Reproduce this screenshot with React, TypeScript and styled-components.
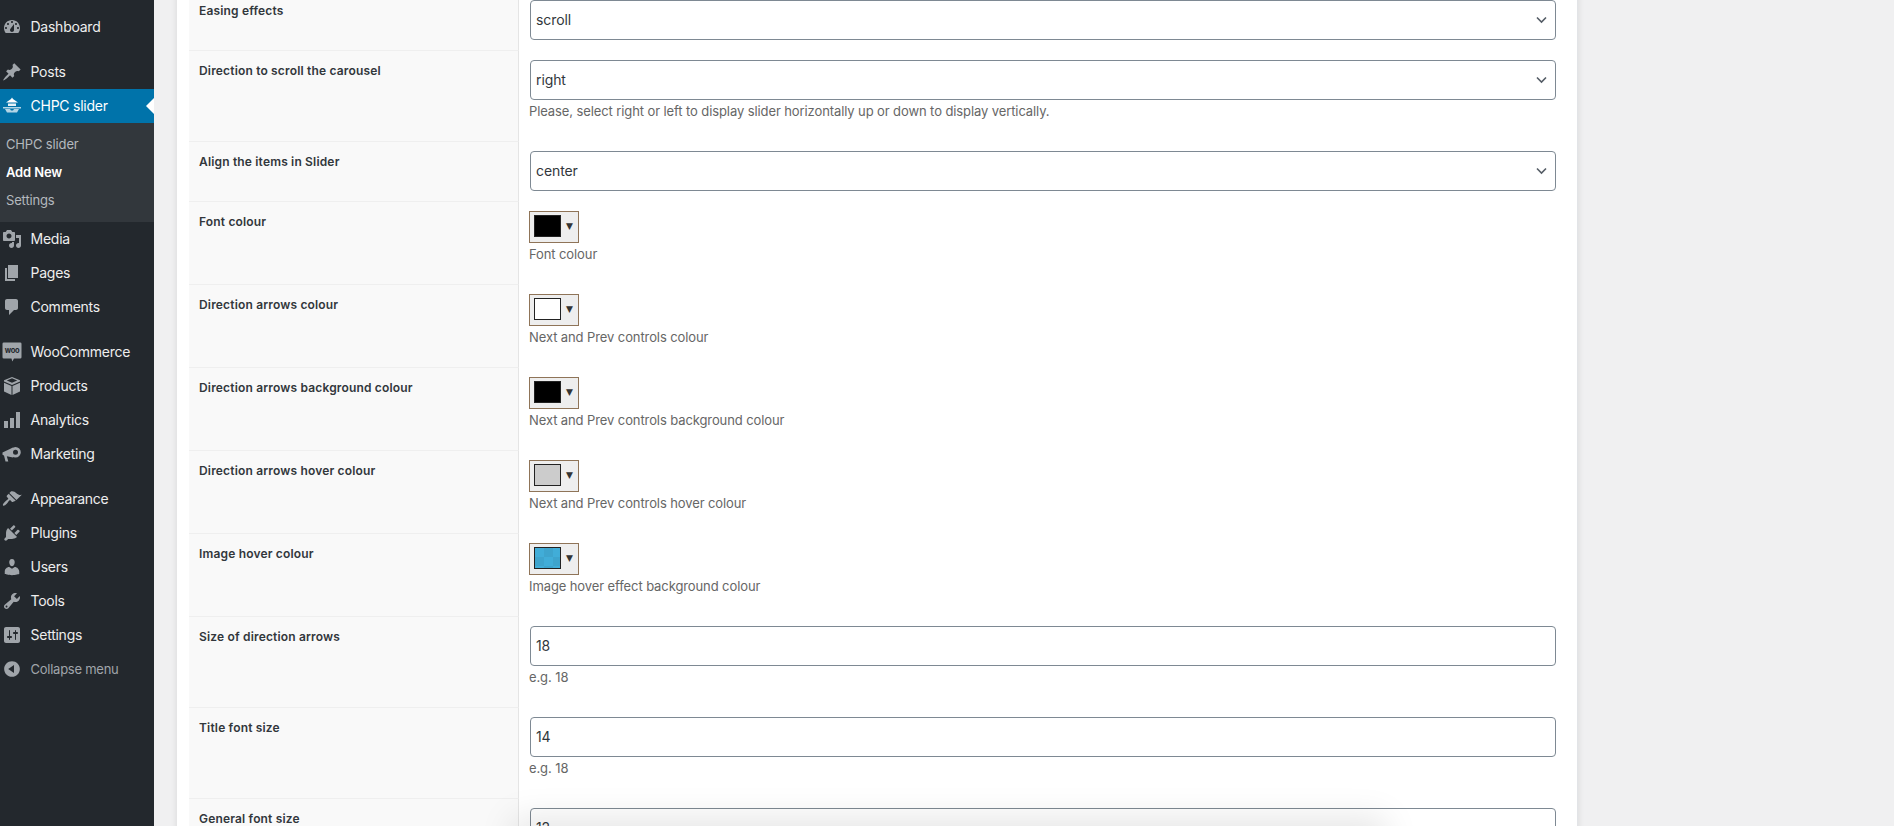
import { ReactNode } from 'react';
import styled, { createGlobalStyle } from 'styled-components';

const GlobalStyle = createGlobalStyle`
  html, body {
    margin: 0;
    height: 826px;
    overflow: hidden;
    background: #f0f0f1;
    font-family: Inter, "Noto Sans", sans-serif;
  }
`;

const Page = styled.div`
  display: flex;
  height: 826px;
  overflow: hidden;
`;

const Sidebar = styled.nav`
  flex: 0 0 154px;
  padding-top: 10px;
  background: #23282d;
`;

const MenuList = styled.ul<{ $flush?: boolean }>`
  margin: 0 0 ${({ $flush }) => ($flush ? 0 : 11)}px;
  padding: 0;
  list-style: none;
`;

const MenuItem = styled.li<{ $current?: boolean; $muted?: boolean }>`
  position: relative;
  box-sizing: border-box;
  display: flex;
  align-items: center;
  height: 34px;
  padding: 0 0 1px 2px;
  gap: 8.5px;
  font-size: ${({ $muted }) => ($muted ? 13 : 14)}px;
  letter-spacing: -0.25px;
  color: ${({ $muted }) => ($muted ? '#a0a5aa' : '#eee')};
  background: ${({ $current }) => ($current ? '#0073aa' : 'transparent')};
  ${({ $current }) =>
    $current &&
    `
    color: #fff;
    &::after {
      content: '';
      position: absolute;
      right: 0;
      top: 50%;
      margin-top: -8px;
      border: 8px solid transparent;
      border-right-color: #fff;
      border-left-width: 0;
    }
  `}
`;

const MenuIcon = styled.svg<{ $light?: boolean }>`
  flex: 0 0 20px;
  width: 20px;
  height: 20px;
  fill: ${({ $light }) => ($light ? '#fff' : '#a0a5aa')};
`;

const SubMenu = styled.ul`
  box-sizing: border-box;
  display: flex;
  flex-direction: column;
  justify-content: center;
  height: 99px;
  margin: 0;
  padding: 0 0 2px 6px;
  list-style: none;
  background: #32373c;
`;

const SubItem = styled.li<{ $active?: boolean }>`
  font-size: 13px;
  line-height: 28px;
  letter-spacing: -0.15px;
  color: ${({ $active }) => ($active ? '#fff' : '#b4b9be')};
  font-weight: ${({ $active }) => ($active ? 600 : 400)};
`;

const Main = styled.main`
  position: relative;
  flex: 1;
  min-width: 0;
  padding: 0 316px 0 23px;
`;

const Card = styled.div`
  margin-top: -9px;
  padding: 0 11px 0 12px;
  background: #fff;
  border-right: 1px solid #e2e4e7;
  box-shadow: 0 0 7px rgba(0, 0, 0, 0.1);
`;

const Row = styled.div`
  display: grid;
  grid-template-columns: 330px 1fr;
`;

const Label = styled.div`
  padding: 12px 0 0 10px;
  background: #f9f9f9;
  border-right: 1px solid #e5e5e5;
  border-bottom: 1px solid #efefef;
  color: #32373c;
  font-size: 12px;
  font-weight: 600;
  line-height: 16px;
  letter-spacing: 0.17px;
`;

const Field = styled.div`
  padding: 9px 10px 10px 10px;
  border-bottom: 1px solid #fff;
`;

const SelectWrap = styled.div`
  position: relative;
  margin-left: 1px;
`;

const Select = styled.select`
  display: block;
  width: 100%;
  height: 40px;
  padding: 0 24px 1px 5px;
  appearance: none;
  background: #fff;
  border: 1px solid #7e8993;
  border-radius: 4px;
  color: #32373c;
  font: 400 14px Inter, sans-serif;
  letter-spacing: -0.1px;
`;

const Chevron = styled.svg`
  position: absolute;
  right: 9px;
  top: 16px;
  width: 11px;
  height: 8px;
  fill: none;
  stroke: #555d66;
  stroke-width: 1.6;
`;

const NumberInput = styled.input`
  display: block;
  box-sizing: border-box;
  width: calc(100% - 1px);
  height: 40px;
  margin-left: 1px;
  padding: 0 5px 1px;
  background: #fff;
  border: 1px solid #7e8993;
  border-radius: 4px;
  color: #32373c;
  font: 400 14px Inter, sans-serif;
  letter-spacing: -0.1px;
`;

const Description = styled.p`
  margin: 0;
  padding-bottom: 9px;
  font-size: 13px;
  line-height: 22px;
  letter-spacing: -0.1px;
  color: #666;
`;

const Picker = styled.div`
  box-sizing: border-box;
  display: flex;
  align-items: center;
  width: 50px;
  height: 32px;
  padding: 0 0 2px 4px;
  background: #eee;
  border: 1px solid #8f7458;
`;

const Swatch = styled.span<{ $colour: string; $pattern?: boolean }>`
  box-sizing: border-box;
  width: 27px;
  height: 22px;
  border: 1px solid #222;
  background-color: ${({ $colour }) => $colour};
  ${({ $pattern }) =>
    $pattern &&
    `
    background-image: repeating-conic-gradient(rgba(0, 0, 0, 0.05) 0 25%, transparent 0 50%);
    background-size: 18px 18px;
  `}
`;

const PickerArrow = styled.span`
  margin-left: 5px;
  font: 9px "DejaVu Sans", sans-serif;
  color: #333;
`;

const BottomGlow = styled.div`
  position: absolute;
  left: 370px;
  bottom: -34px;
  width: 850px;
  height: 30px;
  background: rgba(0, 0, 0, 0.1);
  box-shadow: 0 0 34px 12px rgba(0, 0, 0, 0.1);
  pointer-events: none;
`;

type IconProps = { light?: boolean; children: ReactNode };

function Icon({ light, children }: IconProps) {
  return (
    <MenuIcon viewBox="0 0 20 20" $light={light}>
      {children}
    </MenuIcon>
  );
}

const paths: Record<string, string> = {
  dashboard:
    'M3.76 16h12.48c1.1-1.37 1.76-3.11 1.76-5 0-4.42-3.58-8-8-8s-8 3.58-8 8c0 1.89.66 3.63 1.76 5zM10 4c.55 0 1 .45 1 1s-.45 1-1 1-1-.45-1-1 .45-1 1-1zM6 6c.55 0 1 .45 1 1s-.45 1-1 1-1-.45-1-1 .45-1 1-1zm8 0c.55 0 1 .45 1 1s-.45 1-1 1-1-.45-1-1 .45-1 1-1zm-5.37 5.55L12 7v6c0 1.1-.9 2-2 2s-2-.9-2-2c0-.57.24-1.08.63-1.45zM4 10c.55 0 1 .45 1 1s-.45 1-1 1-1-.45-1-1 .45-1 1-1zm12 0c.55 0 1 .45 1 1s-.45 1-1 1-1-.45-1-1 .45-1 1-1z',
  posts:
    'M10.44 3.02l1.82-1.82 6.36 6.35-1.83 1.82c-1.05-.68-2.48-.57-3.41.36l-.75.75c-.92.93-1.04 2.35-.35 3.41l-1.83 1.82-2.41-2.41-2.8 2.79c-.42.42-3.38 2.71-3.8 2.29s1.86-3.39 2.28-3.81l2.79-2.79L4.1 9.36l1.83-1.82c1.05.69 2.48.57 3.4-.36l.75-.75c.93-.92 1.05-2.35.36-3.41z',
  media:
    'M13 11V4c0-.55-.45-1-1-1h-1.67L9 1H5L3.67 3H2c-.55 0-1 .45-1 1v7c0 .55.45 1 1 1h10c.55 0 1-.45 1-1zM7 4.5c1.38 0 2.5 1.12 2.5 2.5S8.38 9.5 7 9.5 4.5 8.38 4.5 7 5.62 4.5 7 4.5zM14 6h5v10.5c0 1.38-1.12 2.5-2.5 2.5S14 17.88 14 16.5s1.12-2.5 2.5-2.5c.17 0 .34.02.5.05V9h-3V6zm-4 8.05V13h2v3.5c0 1.38-1.12 2.5-2.5 2.5S7 17.88 7 16.5 8.12 14 9.5 14c.17 0 .34.02.5.05z',
  pages: 'M6 15V2h10v13H6zm-1 1h8v2H3V5h2v11z',
  comments:
    'M5 2h9c1.1 0 2 .9 2 2v7c0 1.1-.9 2-2 2h-2l-5 5v-5H5c-1.1 0-2-.9-2-2V4c0-1.1.9-2 2-2z',
  products:
    'M10 1l8 3.200v1.300L10 9 2 5.500V4.200zM4.800 4.500l5.200 2.300 5.200-2.300-5.200-2.200zM2 6.800l7.500 3.300V19L2 15.500zM18 6.800v8.700L10.500 19v-8.900z',
  analytics: 'M2 11h4v7H2zM8 8h4v10H8zM14 2h4v16h-4z',
  appearance:
    'M14.480 11.060L7.410 3.990l1.500-1.500c.5-.56 2.300-.47 3.510.32 1.210.8 1.430 1.280 2.910 2.100 1.180.64 2.450 1.260 4.450.85zm-.71.71L6.700 4.700 4.930 6.470c-.39.39-.39 1.020 0 1.410l1.060 1.060c.39.39.39 1.030 0 1.420-.6.6-1.430 1.110-2.210 1.690-.35.26-.7.53-1.010.84-1.340 1.340-2.370 2.960-1.750 3.710.75.62 2.360-.42 3.720-1.780.31-.31.58-.66.85-1.010.57-.78 1.080-1.610 1.690-2.210.39-.39 1.020-.39 1.410 0l1.060 1.060c.39.39 1.020.39 1.410 0z',
  plugins:
    'M13.110 4.360L9.870 7.600 8 5.730l3.240-3.240c.35-.34 1.050-.2 1.560.32.52.51.66 1.210.31 1.550zm-8 1.770l.91-1.120 9.010 9.010-1.190.84c-.71.71-2.630 1.160-3.820 1.160H6.140L4.900 17.260c-.59.59-1.540.59-2.120 0-.59-.58-.59-1.530 0-2.120l1.240-1.240v-3.880c0-1.130.4-3.190 1.090-3.890zm7.260 3.970l3.240-3.240c.34-.35 1.040-.21 1.550.31.52.51.66 1.210.31 1.550l-3.240 3.250z',
  users:
    'M10 9.250c-2.270 0-2.730-3.440-2.730-3.440C7 4.020 7.820 2 9.970 2c2.160 0 2.980 2.020 2.710 3.810 0 0-.41 3.440-2.680 3.440zm0 2.570L12.720 10c2.390 0 4.520 2.330 4.520 4.530v2.490s-3.650 1.130-7.240 1.130c-3.650 0-7.240-1.130-7.240-1.130v-2.490c0-2.250 1.940-4.480 4.470-4.480z',
  tools:
    'M16.680 9.770c-1.340 1.340-3.300 1.670-4.950.99l-5.410 6.520c-.99.99-2.590.99-3.580 0s-.99-2.590 0-3.570l6.520-5.420c-.68-1.650-.35-3.610.99-4.950 1.280-1.280 3.120-1.620 4.720-1.060l-2.890 2.890 2.820 2.820 2.860-2.870c.53 1.580.18 3.390-1.080 4.650zM3.810 16.210c.4.39 1.040.39 1.430 0 .4-.4.4-1.040 0-1.430-.39-.4-1.030-.4-1.430 0-.39.39-.39 1.030 0 1.430z',
  settings:
    'M18 16V4c0-1.100-.9-2-2-2H4c-1.100 0-2 .9-2 2v12c0 1.100.9 2 2 2h12c1.100 0 2-.9 2-2zM8 11h1c.55 0 1 .45 1 1s-.45 1-1 1H8v1.500c0 .28-.22.5-.5.5s-.5-.22-.5-.5V13H6c-.55 0-1-.45-1-1s.45-1 1-1h1V5.500c0-.28.22-.5.5-.5s.5.22.5.5V11zm5-2h-1c-.55 0-1-.45-1-1s.45-1 1-1h1V5.500c0-.28.22-.5.5-.5s.5.22.5.5V7h1c.55 0 1 .45 1 1s-.45 1-1 1h-1v5.500c0 .28-.22.5-.5.5s-.5-.22-.5-.5V9z',
  collapse:
    'M10 2.160c4.330 0 7.840 3.510 7.840 7.840s-3.510 7.840-7.840 7.840S2.160 14.330 2.160 10 5.670 2.160 10 2.160zm2 11.720V6.120L6.180 9.970z',
};

function DashIcon({ name }: { name: string }) {
  return (
    <Icon>
      <path d={paths[name]} />
    </Icon>
  );
}

function WooIcon() {
  return (
    <Icon>
      <path d="M1.800 0.500h16.400A1.300 1.300 0 0 1 19.500 1.800v13.400a1.300 1.300 0 0 1-1.300 1.300H12l-1.700 3-.8-3H1.800A1.300 1.300 0 0 1 .5 15.200V1.800A1.300 1.300 0 0 1 1.800 .5z" />
      <text x="10" y="11" textAnchor="middle" fontSize="7.500" fontWeight="700" letterSpacing="-.3" fill="#23282d" fontFamily="Inter, sans-serif">
        woo
      </text>
    </Icon>
  );
}

function MarketingIcon() {
  return (
    <Icon>
      <path d="M.5 8.500L11 3.500v10l-6.200-1.300 1.500 5.300H3.500L2 11.500.5 10.800z" />
      <path
        fillRule="evenodd"
        d="M13.500 3a5.300 5.300 0 1 1 0 10.600 5.300 5.300 0 0 1 0-10.600zm0 2.800a2.500 2.500 0 1 0 0 5 2.500 2.500 0 0 0 0-5z"
      />
    </Icon>
  );
}

function SliderIcon() {
  return (
    <Icon light>
      <path d="M10 1.500l1 1.500 5 3.500H4l5-3.500z" />
      <path d="M6 7.500h8v2.500H6z" opacity=".9" />
      <path d="M1 11h18v1.500H1z" opacity=".7" />
      <path d="M3 13h5l1 1.500h2l1-1.500h5l-2 3.500H5z" opacity=".7" />
    </Icon>
  );
}

type SelectFieldProps = { value: string; hint?: string };

function SelectField({ value, hint }: SelectFieldProps) {
  return (
    <Field>
      <SelectWrap>
        <Select defaultValue={value}>
          <option>{value}</option>
        </Select>
        <Chevron viewBox="0 0 11 8">
          <path d="M1 1.500l4.500 4.500L10 1.500" />
        </Chevron>
      </SelectWrap>
      {hint && <Description>{hint}</Description>}
    </Field>
  );
}

type ColourFieldProps = { colour: string; pattern?: boolean; hint: string };

function ColourField({ colour, pattern, hint }: ColourFieldProps) {
  return (
    <Field>
      <Picker>
        <Swatch $colour={colour} $pattern={pattern} />
        <PickerArrow>▼</PickerArrow>
      </Picker>
      <Description>{hint}</Description>
    </Field>
  );
}

function NumberField({ value, hint }: { value: string; hint?: string }) {
  return (
    <Field>
      <NumberInput defaultValue={value} />
      {hint && <Description>{hint}</Description>}
    </Field>
  );
}

export default function App() {
  return (
    <>
      <GlobalStyle />
      <Page>
        <Sidebar>
          <MenuList>
            <MenuItem>
              <DashIcon name="dashboard" />
              Dashboard
            </MenuItem>
          </MenuList>
          <MenuList $flush>
            <MenuItem>
              <DashIcon name="posts" />
              Posts
            </MenuItem>
            <MenuItem $current>
              <SliderIcon />
              CHPC slider
            </MenuItem>
          </MenuList>
          <SubMenu>
            <SubItem>CHPC slider</SubItem>
            <SubItem $active>Add New</SubItem>
            <SubItem>Settings</SubItem>
          </SubMenu>
          <MenuList>
            <MenuItem>
              <DashIcon name="media" />
              Media
            </MenuItem>
            <MenuItem>
              <DashIcon name="pages" />
              Pages
            </MenuItem>
            <MenuItem>
              <DashIcon name="comments" />
              Comments
            </MenuItem>
          </MenuList>
          <MenuList>
            <MenuItem>
              <WooIcon />
              WooCommerce
            </MenuItem>
            <MenuItem>
              <DashIcon name="products" />
              Products
            </MenuItem>
            <MenuItem>
              <DashIcon name="analytics" />
              Analytics
            </MenuItem>
            <MenuItem>
              <MarketingIcon />
              Marketing
            </MenuItem>
          </MenuList>
          <MenuList>
            <MenuItem>
              <DashIcon name="appearance" />
              Appearance
            </MenuItem>
            <MenuItem>
              <DashIcon name="plugins" />
              Plugins
            </MenuItem>
            <MenuItem>
              <DashIcon name="users" />
              Users
            </MenuItem>
            <MenuItem>
              <DashIcon name="tools" />
              Tools
            </MenuItem>
            <MenuItem>
              <DashIcon name="settings" />
              Settings
            </MenuItem>
            <MenuItem $muted>
              <DashIcon name="collapse" />
              Collapse menu
            </MenuItem>
          </MenuList>
        </Sidebar>
        <Main>
          <Card>
            <Row>
              <Label>Easing effects</Label>
              <SelectField value="scroll" />
            </Row>
            <Row>
              <Label>Direction to scroll the carousel</Label>
              <SelectField
                value="right"
                hint="Please, select right or left to display slider horizontally up or down to display vertically."
              />
            </Row>
            <Row>
              <Label>Align the items in Slider</Label>
              <SelectField value="center" />
            </Row>
            <Row>
              <Label>Font colour</Label>
              <ColourField colour="#000" hint="Font colour" />
            </Row>
            <Row>
              <Label>Direction arrows colour</Label>
              <ColourField colour="#fff" hint="Next and Prev controls colour" />
            </Row>
            <Row>
              <Label>Direction arrows background colour</Label>
              <ColourField colour="#000" hint="Next and Prev controls background colour" />
            </Row>
            <Row>
              <Label>Direction arrows hover colour</Label>
              <ColourField colour="#ccc" hint="Next and Prev controls hover colour" />
            </Row>
            <Row>
              <Label>Image hover colour</Label>
              <ColourField colour="#41add8" pattern hint="Image hover effect background colour" />
            </Row>
            <Row>
              <Label>Size of direction arrows</Label>
              <NumberField value="18" hint="e.g. 18" />
            </Row>
            <Row>
              <Label>Title font size</Label>
              <NumberField value="14" hint="e.g. 18" />
            </Row>
            <Row>
              <Label>General font size</Label>
              <NumberField value="12" hint="e.g. 12" />
            </Row>
          </Card>
          <BottomGlow />
        </Main>
      </Page>
    </>
  );
}
